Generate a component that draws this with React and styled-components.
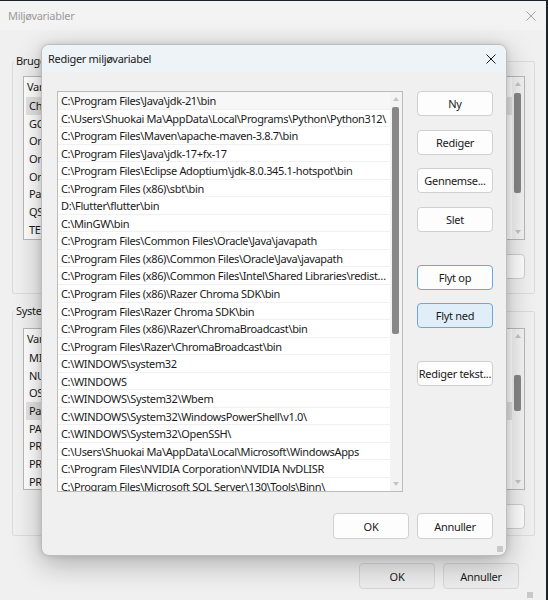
import React from 'react'
import styled, { createGlobalStyle } from 'styled-components'

const GlobalStyle = createGlobalStyle`
  html, body {
    margin: 0;
    padding: 0;
    background: #1e2229;
  }
  body {
    font-family: "Noto Sans", "Open Sans", sans-serif;
    font-size: 11px;
    letter-spacing: -0.3px;
    color: #1a1a1a;
  }
`

const userVars = ['Variabel', 'ChocolateyLastPathUpdate', 'GOPATH', 'OneDrive', 'OneDriveCommercial', 'OneDriveConsumer', 'Path', 'QSYS_HOME', 'TEMP']
const systemVars = ['Variabel', 'MIC_LD_LIBRARY_PATH', 'NUMBER_OF_PROCESSORS', 'OS', 'Path', 'PATHEXT', 'PROCESSOR_ARCHITECTURE', 'PROCESSOR_IDENTIFIER', 'PROCESSOR_LEVEL']

const paths = [
  'C:\\Program Files\\Java\\jdk-21\\bin',
  'C:\\Users\\Shuokai Ma\\AppData\\Local\\Programs\\Python\\Python312\\',
  'C:\\Program Files\\Maven\\apache-maven-3.8.7\\bin',
  'C:\\Program Files\\Java\\jdk-17+fx-17',
  'C:\\Program Files\\Eclipse Adoptium\\jdk-8.0.345.1-hotspot\\bin',
  'C:\\Program Files (x86)\\sbt\\bin',
  'D:\\Flutter\\flutter\\bin',
  'C:\\MinGW\\bin',
  'C:\\Program Files\\Common Files\\Oracle\\Java\\javapath',
  'C:\\Program Files (x86)\\Common Files\\Oracle\\Java\\javapath',
  'C:\\Program Files (x86)\\Common Files\\Intel\\Shared Libraries\\redist\\intel64\\compiler',
  'C:\\Program Files (x86)\\Razer Chroma SDK\\bin',
  'C:\\Program Files\\Razer Chroma SDK\\bin',
  'C:\\Program Files (x86)\\Razer\\ChromaBroadcast\\bin',
  'C:\\Program Files\\Razer\\ChromaBroadcast\\bin',
  'C:\\WINDOWS\\system32',
  'C:\\WINDOWS',
  'C:\\WINDOWS\\System32\\Wbem',
  'C:\\WINDOWS\\System32\\WindowsPowerShell\\v1.0\\',
  'C:\\WINDOWS\\System32\\OpenSSH\\',
  'C:\\Users\\Shuokai Ma\\AppData\\Local\\Microsoft\\WindowsApps',
  'C:\\Program Files\\NVIDIA Corporation\\NVIDIA NvDLISR',
  'C:\\Program Files\\Microsoft SQL Server\\130\\Tools\\Binn\\',
]

/* ---------- background window ---------- */

const Desktop = styled.div`
  width: 548px;
  height: 600px;
  overflow: hidden;
  position: relative;
  padding-top: 1px;
  box-sizing: border-box;
`

const Window = styled.div`
  width: 546px;
  height: 599px;
  background: #f0f0f0;
  border-top-right-radius: 8px;
  display: flex;
  flex-direction: column;
`

const TitleBar = styled.div`
  height: 29px;
  display: flex;
  align-items: center;
  justify-content: space-between;
  padding: 0 10px 0 8px;
  color: ${p => (p.$active ? '#1a1a1a' : '#9b9b9b')};
  background: ${p => (p.$active ? '#eef3f8' : '#f3f3f3')};
  flex-shrink: 0;
`

const WindowBody = styled.div`
  flex: 1;
  padding: 0 11px 0 12px;
  display: flex;
  flex-direction: column;
`

const Group = styled.fieldset`
  margin: ${p => p.$top}px 0 0;
  padding: 0 9px ${p => p.$bottom}px 10px;
  border: 1px solid #dcdcdc;
  border-radius: 2px;
  min-width: 0;
`

const Legend = styled.legend`
  padding: 0 2px;
  margin-left: -9px;
  line-height: 16px;
  color: #1a1a1a;
`

const VarList = styled.div`
  margin-top: ${p => p.$top}px;
  height: ${p => p.$height}px;
  background: #fff;
  border: 1px solid #b9b9b9;
  display: flex;
  overflow: hidden;
`

const VarColumn = styled.div`
  flex: 1;
  min-width: 0;
`

const VarHeader = styled.div`
  height: 20px;
  line-height: 20px;
  padding-left: 3px;
`

const VarRow = styled.div`
  height: 17.7px;
  line-height: 17.7px;
  padding-left: 3px;
  margin-left: 2px;
  white-space: nowrap;
  background: ${p => (p.$selected ? '#e4e4e4' : 'transparent')};
`

const Track = styled.div`
  width: 12px;
  flex-shrink: 0;
  background: #f3f3f3;
  position: relative;
`

const Thumb = styled.div`
  position: absolute;
  left: 2px;
  width: 7px;
  border-radius: 2px;
  background: #878787;
`

const Arrow = styled.div`
  position: absolute;
  left: 3px;
  width: 0;
  height: 0;
  border-left: 3px solid transparent;
  border-right: 3px solid transparent;
  ${p => (p.$down ? 'border-top: 4px solid #c4c4c4;' : 'border-bottom: 4px solid #c4c4c4;')}
`

const ButtonRow = styled.div`
  margin-top: ${p => p.$top}px;
  display: flex;
  justify-content: flex-end;
  gap: 8px;
  padding-right: ${p => p.$right || 0}px;
`

const Button = styled.button`
  width: 76px;
  height: ${p => p.$h || 25}px;
  padding: 0;
  font: inherit;
  letter-spacing: inherit;
  color: #1a1a1a;
  border-radius: 4px;
  border: 1px solid ${p => (p.$focus ? '#6ea5da' : p.$dim ? '#d6d6d6' : '#d0d0d0')};
  background: ${p => (p.$hover ? '#e0eef9' : p.$dim ? '#ececec' : '#fdfdfd')};
  white-space: nowrap;
  flex-shrink: 0;
`

const Close = ({ color }) => (
  <svg width="10" height="10" viewBox="0 0 10 10">
    <path d="M0.5 0.5 L9.5 9.5 M9.5 0.5 L0.5 9.5" stroke={color} strokeWidth="1" />
  </svg>
)

const Grip = styled.div`
  width: 6px;
  height: 6px;
  align-self: flex-end;
  margin: auto 2px 2px 0;
  background-image: radial-gradient(circle, #9a9a9a 0.6px, transparent 0.8px);
  background-size: 2px 2px;
`

const VariableList = ({ items, selected, top, height, thumbTop, thumbHeight }) => (
  <VarList $top={top} $height={height}>
    <VarColumn>
      <VarHeader>{items[0]}</VarHeader>
      {items.slice(1).map((name, i) => (
        <VarRow key={name} $selected={i === selected}>{name}</VarRow>
      ))}
    </VarColumn>
    <Track>
      <Arrow style={{ top: 5 }} />
      <Thumb style={{ top: thumbTop, height: thumbHeight }} />
      <Arrow $down style={{ bottom: 5 }} />
    </Track>
  </VarList>
)

/* ---------- edit dialog ---------- */

const Dialog = styled.div`
  position: absolute;
  left: 41px;
  top: 44px;
  width: 466px;
  height: 512px;
  box-sizing: border-box;
  background: #f0f0f0;
  border: 1px solid #bdbdbd;
  border-radius: 8px;
  overflow: hidden;
  box-shadow: 0 8px 28px rgba(0, 0, 0, 0.28), 0 0 6px rgba(0, 0, 0, 0.12);
  display: flex;
  flex-direction: column;
`

const DialogTitle = styled(TitleBar)`
  height: 27px;
  padding: 0 10px 0 6px;
`

const DialogBody = styled.div`
  display: flex;
  gap: 14px;
  padding: 19px 0 0 15px;
`

const PathList = styled.div`
  width: 346px;
  height: 401px;
  box-sizing: border-box;
  background: #fff;
  border: 1px solid #bcbcbc;
  display: flex;
  overflow: hidden;
`

const PathColumn = styled.div`
  flex: 1;
  min-width: 0;
`

const PathRow = styled.div`
  height: 17.55px;
  line-height: 17.55px;
  padding: 0 1px 0 3px;
  letter-spacing: -0.35px;
  border-bottom: 1px solid #f1f1f1;
  box-sizing: border-box;
  white-space: nowrap;
  overflow: hidden;
  text-overflow: ellipsis;
  background: ${p => (p.$current ? '#f7f7f7' : '#fff')};
`

const SideButtons = styled.div`
  display: flex;
  flex-direction: column;
`

const SideButton = styled(Button)`
  margin-top: ${p => p.$gap}px;
`

const DialogFooter = styled.div`
  display: flex;
  justify-content: flex-end;
  gap: 8px;
  padding: 21px 13px 0 0;
`

const DialogGrip = styled(Grip)`
  margin: auto 3px 3px 0;
`

export default function App() {
  return (
    <>
      <GlobalStyle />
      <Desktop>
        <Window>
          <TitleBar>
            <span>Miljøvariabler</span>
            <Close color="#a0a0a0" />
          </TitleBar>
          <WindowBody>
            <Group $top={23} $bottom={14}>
              <Legend>Brugervariabler for Shuokai Ma</Legend>
              <VariableList items={userVars} selected={0} top={7} height={162} thumbTop={16} thumbHeight={100} />
              <ButtonRow $top={14}>
                <Button>Ny...</Button>
                <Button>Rediger...</Button>
                <Button>Slet</Button>
              </ButtonRow>
            </Group>
            <Group $top={9} $bottom={6}>
              <Legend>Systemvariabler</Legend>
              <VariableList items={systemVars} selected={3} top={9} height={160} thumbTop={46} thumbHeight={36} />
              <ButtonRow $top={14}>
                <Button>Ny...</Button>
                <Button>Rediger...</Button>
                <Button>Slet</Button>
              </ButtonRow>
            </Group>
            <ButtonRow $top={27} $right={16}>
              <Button $dim $h={26}>OK</Button>
              <Button $dim $h={26}>Annuller</Button>
            </ButtonRow>
            <Grip />
          </WindowBody>
        </Window>

        <Dialog>
          <DialogTitle $active>
            <span>Rediger miljøvariabel</span>
            <Close color="#1a1a1a" />
          </DialogTitle>
          <DialogBody>
            <PathList>
              <PathColumn>
                {paths.map((p, i) => (
                  <PathRow key={p} $current={i === 0}>{p}</PathRow>
                ))}
              </PathColumn>
              <Track>
                <Arrow style={{ top: 5 }} />
                <Thumb style={{ top: 15, height: 227 }} />
                <Arrow $down style={{ bottom: 5 }} />
              </Track>
            </PathList>
            <SideButtons>
              <SideButton $gap={0}>Ny</SideButton>
              <SideButton $gap={14}>Rediger</SideButton>
              <SideButton $gap={13}>Gennemse...</SideButton>
              <SideButton $gap={14}>Slet</SideButton>
              <SideButton $gap={33} $focus>Flyt op</SideButton>
              <SideButton $gap={13} $focus $hover>Flyt ned</SideButton>
              <SideButton $gap={33}>Rediger tekst...</SideButton>
            </SideButtons>
          </DialogBody>
          <DialogFooter>
            <Button $h={26}>OK</Button>
            <Button $h={26}>Annuller</Button>
          </DialogFooter>
          <DialogGrip />
        </Dialog>
      </Desktop>
    </>
  )
}
